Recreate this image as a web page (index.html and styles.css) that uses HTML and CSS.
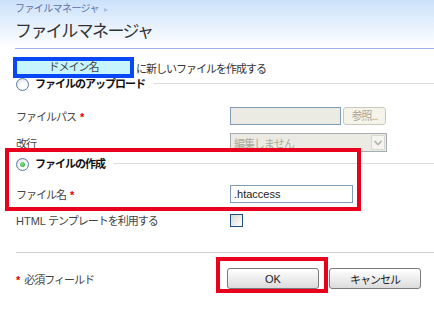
FILE: index.html
```html
<!DOCTYPE html>
<html lang="ja">
<head>
<meta charset="UTF-8">
<title>ファイルマネージャ</title>
<link rel="stylesheet" href="styles.css">
</head>
<body>
<div class="head">
	<div class="crumb">ファイルマネージャ <span class="arr">&#9656;</span></div>
	<h1 class="title">ファイルマネージャ</h1>
</div>
<div class="headline"></div>

<div class="page">
	<div class="intro"><span class="dom">ドメイン名</span>に新しいファイルを作成する</div>

	<div class="legend"><span class="radio"></span><b>ファイルのアップロード</b><span class="rule"></span></div>

	<div class="row r-path">
		<label>ファイルパス<i class="req">*</i></label>
		<div class="fld"><span class="file"></span><span class="browse">参照...</span></div>
	</div>
	<div class="row r-eol">
		<label>改行</label>
		<div class="fld"><span class="sel">編集しません<span class="drop"><svg width="10" height="8" viewBox="0 0 10 8"><path d="M1.5 2 L5 5.5 L8.5 2" fill="none" stroke="#b4b4aa" stroke-width="1.6"/></svg></span></span></div>
	</div>

	<div class="legend create"><span class="radio on"></span><b>ファイルの作成</b><span class="rule"></span></div>

	<div class="row r-name">
		<label>ファイル名<i class="req">*</i></label>
		<div class="fld"><span class="text">.htaccess</span></div>
	</div>
	<div class="row r-html">
		<label><span class="lat">HTML</span> テンプレートを利用する</label>
		<div class="fld"><span class="check"></span></div>
	</div>

	<div class="sep"></div>

	<div class="foot">
		<span><i class="req first">*</i>必須フィールド</span>
		<div class="btns"><span class="btn lat">OK</span><span class="btn">キャンセル</span></div>
	</div>
</div>

<!-- highlight marks drawn over the form -->
<div class="mark mark-create"></div>
<div class="mark mark-ok"></div>
</body>
</html>
```
FILE: styles.css
```css
body {
	margin: 0;
	font-family: "Liberation Sans", "Noto Sans CJK JP", sans-serif;
	font-size: 11px;
	letter-spacing: -1px;
	color: #333;
	background: #fff;
}
.lat {
	letter-spacing: 0;
}
.head {
	height: 48px;
	padding-left: 15px;
	box-sizing: border-box;
	background: linear-gradient(#cbe1fb, #fff);
}
.crumb {
	padding-top: 2px;
	line-height: 13px;
	font-size: 10px;
	letter-spacing: -0.6px;
	color: #5d72ac;
}
.crumb .arr {
	font-size: 8px;
	color: #aebbe0;
	margin-left: 3px;
}
.title {
	margin: 4px 0 0;
	font-size: 17px;
	font-weight: normal;
	line-height: 24px;
	letter-spacing: -1.6px;
	color: #333;
}
.headline {
	height: 1px;
	margin-left: 15px;
	background: #a3b3e3;
}
.page {
	padding-left: 16px;
}
.intro {
	display: flex;
	align-items: center;
	margin: 8px 0 0 -3px;
	color: #333;
}
.dom {
	width: 121px;
	height: 21px;
	box-sizing: border-box;
	border: 4px solid #0747f5;
	background: #c6f5fd;
	display: flex;
	align-items: center;
	justify-content: center;
	margin-right: 2px;
	line-height: 13px;
	color: #444;
}
.legend {
	display: flex;
	align-items: flex-start;
	height: 13px;
}
.legend b {
	line-height: 13px;
	margin-left: 6px;
	color: #111;
}
.legend .rule {
	flex: 1;
	height: 1px;
	margin: 5px 0 0 9px;
	background: #dcdcdc;
}
.create {
	margin-top: 6px;
}
.radio {
	position: relative;
	width: 13px;
	height: 13px;
	box-sizing: border-box;
	border: 1px solid #5b7aa3;
	border-radius: 50%;
	background: radial-gradient(circle at 60% 65%, #fff 30%, #d3d8e0);
}
.radio.on::after {
	content: "";
	position: absolute;
	left: 3px;
	top: 3px;
	width: 5px;
	height: 5px;
	border-radius: 50%;
	background: radial-gradient(circle at 40% 40%, #8fe28f, #1e9a2a);
}
.row {
	display: grid;
	grid-template-columns: 214px auto;
	align-items: center;
}
.row label {
	color: #444;
}
.req {
	font-style: normal;
	font-weight: bold;
	color: #d00;
	margin-left: 4px;
}
.req.first {
	margin: 0 5px 0 0;
}
.r-path {
	margin-top: 16px;
}
.r-eol {
	margin-top: 8px;
}
.r-name {
	margin-top: 14px;
}
.r-html {
	margin-top: 9px;
}
.fld {
	display: flex;
}
.file {
	width: 111px;
	height: 18px;
	box-sizing: border-box;
	border: 1px solid #7f9db9;
	background: #ebebe4;
}
.browse {
	width: 43px;
	height: 18px;
	box-sizing: border-box;
	margin-left: 2px;
	border: 1px solid #cac8bb;
	border-radius: 3px;
	background: #f5f4ea;
	color: #aca899;
	text-align: center;
	line-height: 16px;
}
.sel {
	width: 157px;
	height: 19px;
	box-sizing: border-box;
	padding: 0 1px 0 3px;
	border: 1px solid #a5acb2;
	background: #ebebe4;
	color: #aca899;
	display: flex;
	align-items: center;
	justify-content: space-between;
}
.drop {
	width: 14px;
	height: 15px;
	box-sizing: border-box;
	border: 1px solid #d8d8cf;
	background: #f4f4f0;
	display: flex;
	align-items: center;
	justify-content: center;
}
.text {
	width: 123px;
	height: 18px;
	box-sizing: border-box;
	padding-left: 3px;
	border: 1px solid #7f9db9;
	line-height: 16px;
	letter-spacing: 0;
	color: #222;
}
.check {
	width: 13px;
	height: 13px;
	box-sizing: border-box;
	border: 1px solid #1c5180;
	background: linear-gradient(135deg, #d8d8d2, #fff);
}
.sep {
	height: 1px;
	margin-top: 24px;
	background: #d0d0d0;
}
.foot {
	display: grid;
	grid-template-columns: 211px auto;
	align-items: center;
	margin-top: 15px;
	color: #444;
}
.btns {
	display: flex;
	gap: 10px;
}
.btn {
	width: 92px;
	height: 21px;
	box-sizing: border-box;
	border: 1px solid #7a7a7a;
	border-radius: 3px;
	background: linear-gradient(#fff, #dcdcdc);
	display: flex;
	align-items: center;
	justify-content: center;
	color: #222;
}
.mark {
	position: absolute;
	box-sizing: border-box;
	border: 4px solid #e8001c;
}
.mark-create {
	left: 5px;
	top: 148px;
	width: 356px;
	height: 63px;
}
.mark-ok {
	left: 216px;
	top: 257px;
	width: 112px;
	height: 36px;
}
```
